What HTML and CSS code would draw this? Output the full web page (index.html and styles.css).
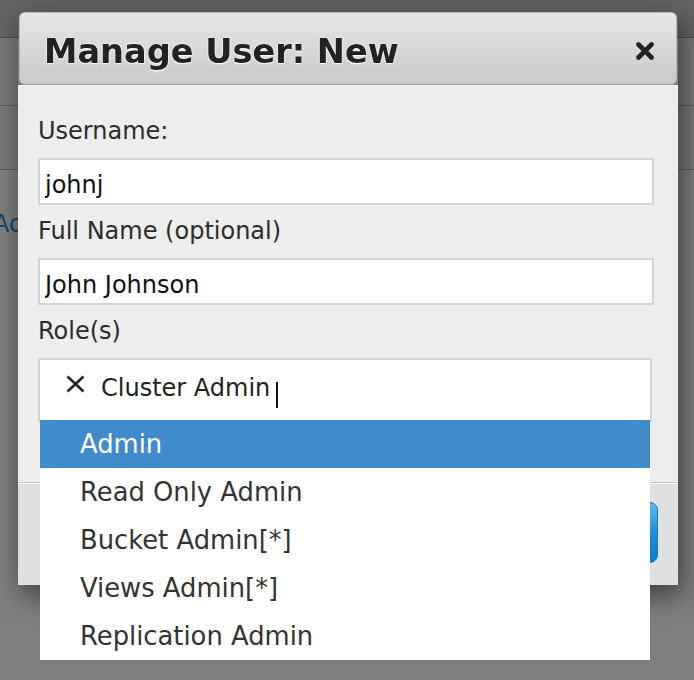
FILE: index.html
```html
<!DOCTYPE html>
<html lang="en">
<head>
<meta charset="utf-8">
<title>Manage User: New</title>
<link rel="stylesheet" href="styles.css">
</head>
<body>
<div class="page">
  <header class="topbar"></header>
  <div class="row row-a"></div>
  <div class="row row-b"></div>
  <div class="row row-c"><a class="page-link" href="#">Add</a></div>
</div>
<div class="overlay"></div>
<div class="dialog" role="dialog" aria-labelledby="dlg-title">
  <div class="dialog-header">
    <h1 id="dlg-title" class="dialog-title">Manage User: New</h1>
    <button class="close-btn" aria-label="Close">
      <svg width="20" height="18" viewBox="0 0 20 18"><path d="M3.5 2.5 L16.5 15.5 M16.5 2.5 L3.5 15.5" stroke="#222" stroke-width="4.6" stroke-linecap="round" fill="none"/></svg>
    </button>
  </div>
  <div class="dialog-body">
    <label class="field-label" for="username">Username:</label>
    <input class="text-input" id="username" type="text" value="johnj">
    <label class="field-label" for="fullname">Full Name (optional)</label>
    <input class="text-input" id="fullname" type="text" value="John Johnson">
    <div class="field-label">Role(s)</div>
    <div class="role-box">
      <div class="role-choice">
        <svg class="role-remove" width="21" height="18" viewBox="0 0 21 18"><path d="M2.5 1.5 L18.5 16.5 M18.5 1.5 L2.5 16.5" stroke="#1e1e1e" stroke-width="2.4" fill="none"/></svg>
        <span class="role-name">Cluster Admin</span>
        <span class="caret"></span>
      </div>
      <ul class="role-menu">
        <li class="role-option active">Admin</li>
        <li class="role-option">Read Only Admin</li>
        <li class="role-option">Bucket Admin[*]</li>
        <li class="role-option">Views Admin[*]</li>
        <li class="role-option">Replication Admin</li>
      </ul>
    </div>
  </div>
  <div class="dialog-footer">
    <button class="save-btn">Save</button>
  </div>
</div>
</body>
</html>
```
FILE: styles.css
```css
html, body {
  margin: 0;
  padding: 0;
}
body {
  background: #ffffff;
  font-family: "DejaVu Sans", Verdana, sans-serif;
  width: 694px;
  height: 680px;
  overflow: hidden;
}
.page {
  display: flex;
  flex-direction: column;
}
.topbar {
  height: 37px;
  background: #c6c6c6;
  border-bottom: 1px solid #9a9a9a;
}
.row {
  border-bottom: 1px solid #b8b8b8;
  background: #f4f4f4;
}
.row-a { height: 67px; }
.row-b { height: 63px; }
.row-c {
  height: 80px;
  border-bottom: none;
  background: #ffffff;
  padding-top: 40px;
}
.page-link {
  display: block;
  margin-left: -7px;
  font-size: 24px;
  line-height: 28px;
  color: #2f8fd0;
  text-decoration: none;
}
.overlay {
  position: fixed;
  inset: 0;
  background: rgba(0, 0, 0, 0.5);
}
.dialog {
  position: absolute;
  left: 18px;
  top: 12px;
  width: 660px;
  display: flex;
  flex-direction: column;
  box-shadow: 4px 10px 28px rgba(0, 0, 0, 0.55);
  border-radius: 6px 6px 0 0;
}
.dialog-header {
  margin: 0 1px;
  height: 73px;
  box-sizing: border-box;
  border: 1px solid #b9b9b9;
  border-bottom-color: #a6a6a6;
  border-radius: 6px;
  background: linear-gradient(#e6e6e6, #d6d6d6 55%, #c8c8c8);
  display: flex;
  align-items: flex-start;
  justify-content: space-between;
  padding: 19px 21px 0 24px;
}
.dialog-title {
  margin: 0;
  font-size: 33.6px;
  line-height: 40px;
  font-weight: bold;
  color: #222222;
  text-shadow: 0 0 3px #ffffff, 0 1px 1px #ffffff;
}
.close-btn {
  margin-top: 10px;
  padding: 0;
  border: none;
  background: none;
  width: 20px;
  height: 18px;
  display: flex;
}
.dialog-body {
  background: #ededed;
  padding: 20px 24px 60px 20px;
  display: flex;
  flex-direction: column;
}
.field-label {
  margin: 12px 0 13px;
  font-size: 24px;
  line-height: 28px;
  color: #2c2c2c;
}
.text-input {
  box-sizing: border-box;
  width: 616px;
  height: 47px;
  margin: 0;
  border: 2px solid #cfd6d9;
  border-radius: 0;
  background: #ffffff;
  padding: 6px 5px 0;
  font-family: "DejaVu Sans", Verdana, sans-serif;
  font-size: 24px;
  color: #111111;
  outline: none;
}
.role-box {
  position: relative;
  box-sizing: border-box;
  width: 614px;
  height: 64px;
  border: 2px solid #cfd6d9;
  background: #ffffff;
}
.role-choice {
  display: flex;
  align-items: flex-start;
  padding: 14px 0 0 25px;
}
.role-remove {
  margin-top: 1px;
  flex: none;
}
.role-name {
  margin-left: 15px;
  font-size: 24px;
  line-height: 28px;
  color: #222222;
}
.caret {
  width: 2px;
  height: 26px;
  margin: 8px 0 0 6px;
  background: #111111;
}
.role-menu {
  position: absolute;
  top: 60px;
  left: 0;
  right: 0;
  margin: 0;
  padding: 0;
  list-style: none;
  background: #ffffff;
  z-index: 2;
}
.role-option {
  height: 48px;
  line-height: 48px;
  padding-left: 40px;
  font-size: 25.8px;
  color: #333333;
}
.role-option.active {
  background: #428bca;
  color: #ffffff;
}
.dialog-footer {
  background: #dfe0e0;
  border-top: 1px solid #c8cbcc;
  box-shadow: inset 0 1px 0 #ffffff;
  height: 103px;
  box-sizing: border-box;
  padding: 19px 20px 0;
  display: flex;
  justify-content: flex-end;
  align-items: flex-start;
}
.save-btn {
  width: 140px;
  height: 61px;
  border: 1px solid #1b77c0;
  border-radius: 8px;
  background: linear-gradient(#63b9f0, #1a90de 50%, #0a7fd0);
  color: #ffffff;
  font-family: "DejaVu Sans", Verdana, sans-serif;
  font-size: 24px;
  font-weight: bold;
}
```
